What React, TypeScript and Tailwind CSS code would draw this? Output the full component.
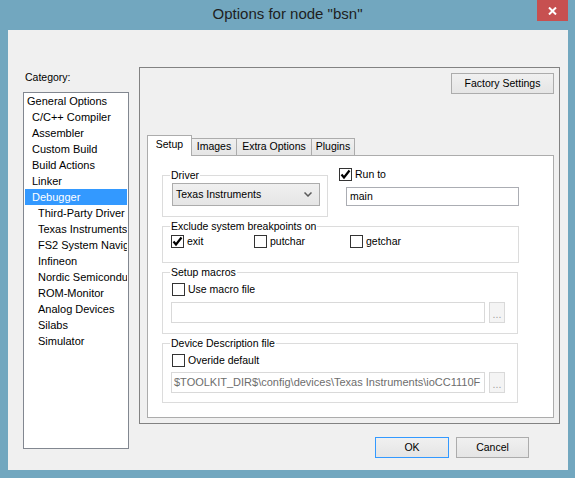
import React from 'react';

// Options dialog for an IAR-style project node, Windows 8 look

const categories: { label: string; level: number; selected?: boolean }[] = [
  { label: 'General Options', level: 0 },
  { label: 'C/C++ Compiler', level: 1 },
  { label: 'Assembler', level: 1 },
  { label: 'Custom Build', level: 1 },
  { label: 'Build Actions', level: 1 },
  { label: 'Linker', level: 1 },
  { label: 'Debugger', level: 1, selected: true },
  { label: 'Third-Party Driver', level: 2 },
  { label: 'Texas Instruments', level: 2 },
  { label: 'FS2 System Navigator', level: 2 },
  { label: 'Infineon', level: 2 },
  { label: 'Nordic Semiconductor', level: 2 },
  { label: 'ROM-Monitor', level: 2 },
  { label: 'Analog Devices', level: 2 },
  { label: 'Silabs', level: 2 },
  { label: 'Simulator', level: 2 },
];

const Checkbox: React.FC<{ checked?: boolean }> = ({ checked }) => (
  <span className="w-[13px] h-[13px] border border-[#333333] bg-white flex items-center justify-center shrink-0">
    {checked && (
      <svg width="11" height="11" viewBox="0 0 11 11">
        <path d="M1.5 5.5 L4 8.5 L9.5 1.5" stroke="#000" strokeWidth="2.2" fill="none" />
      </svg>
    )}
  </span>
);

const GroupBox: React.FC<{ label: string; className?: string; children?: React.ReactNode }> = ({
  label,
  className = '',
  children,
}) => (
  <div className={`relative border border-[#dcdcdc] ${className}`}>
    <span className="absolute -top-[7px] left-[7px] bg-white px-[1px] leading-[13px]">{label}</span>
    {children}
  </div>
);

const Tab: React.FC<{ label: string; width: string; active?: boolean }> = ({ label, width, active }) =>
  active ? (
    <div
      className={`${width} h-[21px] -mb-px relative z-10 border border-b-0 border-[#acacac] bg-white flex items-center justify-center pb-[2px]`}
    >
      {label}
    </div>
  ) : (
    <div
      className={`${width} h-[17px] -ml-px border border-b-0 border-[#acacac] bg-linear-to-b from-[#f0f0f0] to-[#e5e5e5] flex items-center justify-center`}
    >
      {label}
    </div>
  );

export default function App() {
  return (
    <div className="w-[575px] h-[478px] bg-[#72a7bf] flex flex-col font-['Liberation_Sans',Arial,sans-serif] text-[10.5px] text-black">
      {/* Title bar */}
      <div className="relative h-[30px] flex items-center justify-center">
        <span className="text-[15px] text-[#1e1e1e] -mt-px">{'Options for node "bsn"'}</span>
        <div className="absolute right-[7px] top-0 w-[31px] h-[21px] bg-[#c75050] flex items-center justify-center">
          <svg width="9" height="8" viewBox="0 0 9 8">
            <path d="M1 0.5 L8 7.5 M8 0.5 L1 7.5" stroke="#fff" strokeWidth="2" />
          </svg>
        </div>
      </div>

      {/* Client area */}
      <div className="ml-[8px] mr-[7px] h-[440px] bg-[#f0f0f0] flex pl-[15px] pt-[37px]">
        {/* Category list */}
        <div className="w-[106px] flex flex-col">
          <div className="h-[25px] pl-[2px] pt-[4px] leading-[13px]">Category:</div>
          <div className="h-[357px] border border-[#828790] bg-white overflow-hidden text-[11px]">
            {categories.map((c) => (
              <div
                key={c.label}
                className={`h-[16px] leading-[16px] mx-px whitespace-nowrap overflow-hidden ${
                  c.selected ? 'bg-[#3399ff] text-white' : ''
                } ${c.level === 0 ? 'pl-[2px]' : c.level === 1 ? 'pl-[7px]' : 'pl-[13px]'}`}
              >
                {c.label}
              </div>
            ))}
          </div>
        </div>

        {/* Right side */}
        <div className="ml-[10px] w-[421px] flex flex-col">
          <div className="h-[357px] border border-[#828282] flex flex-col pl-[7px] pr-[4px] pt-[5px] pb-[5px]">
            <div className="flex justify-end">
              <button className="w-[103px] h-[21px] mr-px border border-[#acacac] bg-linear-to-b from-[#f0f0f0] to-[#e5e5e5]">
                Factory Settings
              </button>
            </div>

            {/* Tabs */}
            <div className="mt-[41px] h-[20px] flex items-end">
              <Tab label="Setup" width="w-[45px]" active />
              <Tab label="Images" width="w-[46px]" />
              <Tab label="Extra Options" width="w-[76px]" />
              <Tab label="Plugins" width="w-[44px]" />
            </div>

            <div className="flex-1 mr-px border border-[#acacac] bg-white pl-[14px] pt-[12px]">
              {/* Driver + Run to */}
              <div className="flex">
                <GroupBox label="Driver" className="w-[166px] h-[42px] mt-[7px] pl-[9px] pt-[7px]">
                  <div className="w-[148px] h-[23px] border border-[#acacac] bg-linear-to-b from-[#f0f0f0] to-[#e5e5e5] flex items-center justify-between pl-[3px] pr-[7px]">
                    <span>Texas Instruments</span>
                    <svg width="8" height="5" viewBox="0 0 8 5">
                      <path d="M0.5 0.5 L4 4 L7.5 0.5" stroke="#5a5a5a" strokeWidth="1.5" fill="none" />
                    </svg>
                  </div>
                </GroupBox>
                <div className="ml-[11px] flex flex-col">
                  <div className="flex items-center gap-[3px] h-[13px]">
                    <Checkbox checked />
                    <span>Run to</span>
                  </div>
                  <div className="ml-[7px] mt-[6px] w-[173px] h-[19px] border border-[#abadb3] bg-white pl-[3px] flex items-center">
                    main
                  </div>
                </div>
              </div>

              {/* Exclude breakpoints */}
              <GroupBox label="Exclude system breakpoints on" className="w-[357px] h-[37px] mt-[9px] pl-[8px] pt-[8px] flex">
                <div className="w-[83px] flex items-center gap-[3px] h-[13px]">
                  <Checkbox checked />
                  <span>exit</span>
                </div>
                <div className="w-[96px] flex items-center gap-[3px] h-[13px]">
                  <Checkbox />
                  <span>putchar</span>
                </div>
                <div className="flex items-center gap-[3px] h-[13px]">
                  <Checkbox />
                  <span>getchar</span>
                </div>
              </GroupBox>

              {/* Setup macros */}
              <GroupBox label="Setup macros" className="w-[356px] h-[62px] mt-[9px] pl-[8px] pt-[10px]">
                <div className="ml-px flex items-center gap-[3px] h-[13px]">
                  <Checkbox />
                  <span>Use macro file</span>
                </div>
                <div className="mt-[6px] flex gap-[4px]">
                  <div className="w-[314px] h-[21px] border border-[#d9d9d9] bg-white" />
                  <div className="w-[16px] h-[21px] border border-[#d9d9d9] bg-[#f4f4f4] flex items-end justify-center pb-[3px] text-[#a0a0a0] leading-none">
                    ...
                  </div>
                </div>
              </GroupBox>

              {/* Device description */}
              <GroupBox label="Device Description file" className="w-[356px] h-[60px] mt-[9px] pl-[8px] pt-[10px]">
                <div className="ml-px flex items-center gap-[3px] h-[13px]">
                  <Checkbox />
                  <span>Overide default</span>
                </div>
                <div className="mt-[5px] flex gap-[4px]">
                  <div className="w-[314px] h-[21px] border border-[#d9d9d9] bg-white pl-[2px] flex items-center overflow-hidden whitespace-nowrap text-[11px] text-[#6d6d6d]">
                    {'$TOOLKIT_DIR$\\config\\devices\\Texas Instruments\\ioCC1110F'}
                  </div>
                  <div className="w-[16px] h-[21px] border border-[#d9d9d9] bg-[#f4f4f4] flex items-end justify-center pb-[3px] text-[#a0a0a0] leading-none">
                    ...
                  </div>
                </div>
              </GroupBox>
            </div>
          </div>

          {/* Dialog buttons */}
          <div className="mt-[13px] flex justify-end gap-[7px] pr-[31px]">
            <button className="w-[74px] h-[21px] border border-[#3399ff] bg-linear-to-b from-[#f0f0f0] to-[#e5e5e5]">
              OK
            </button>
            <button className="w-[73px] h-[21px] border border-[#acacac] bg-linear-to-b from-[#f0f0f0] to-[#e5e5e5]">
              Cancel
            </button>
          </div>
        </div>
      </div>
    </div>
  );
}
